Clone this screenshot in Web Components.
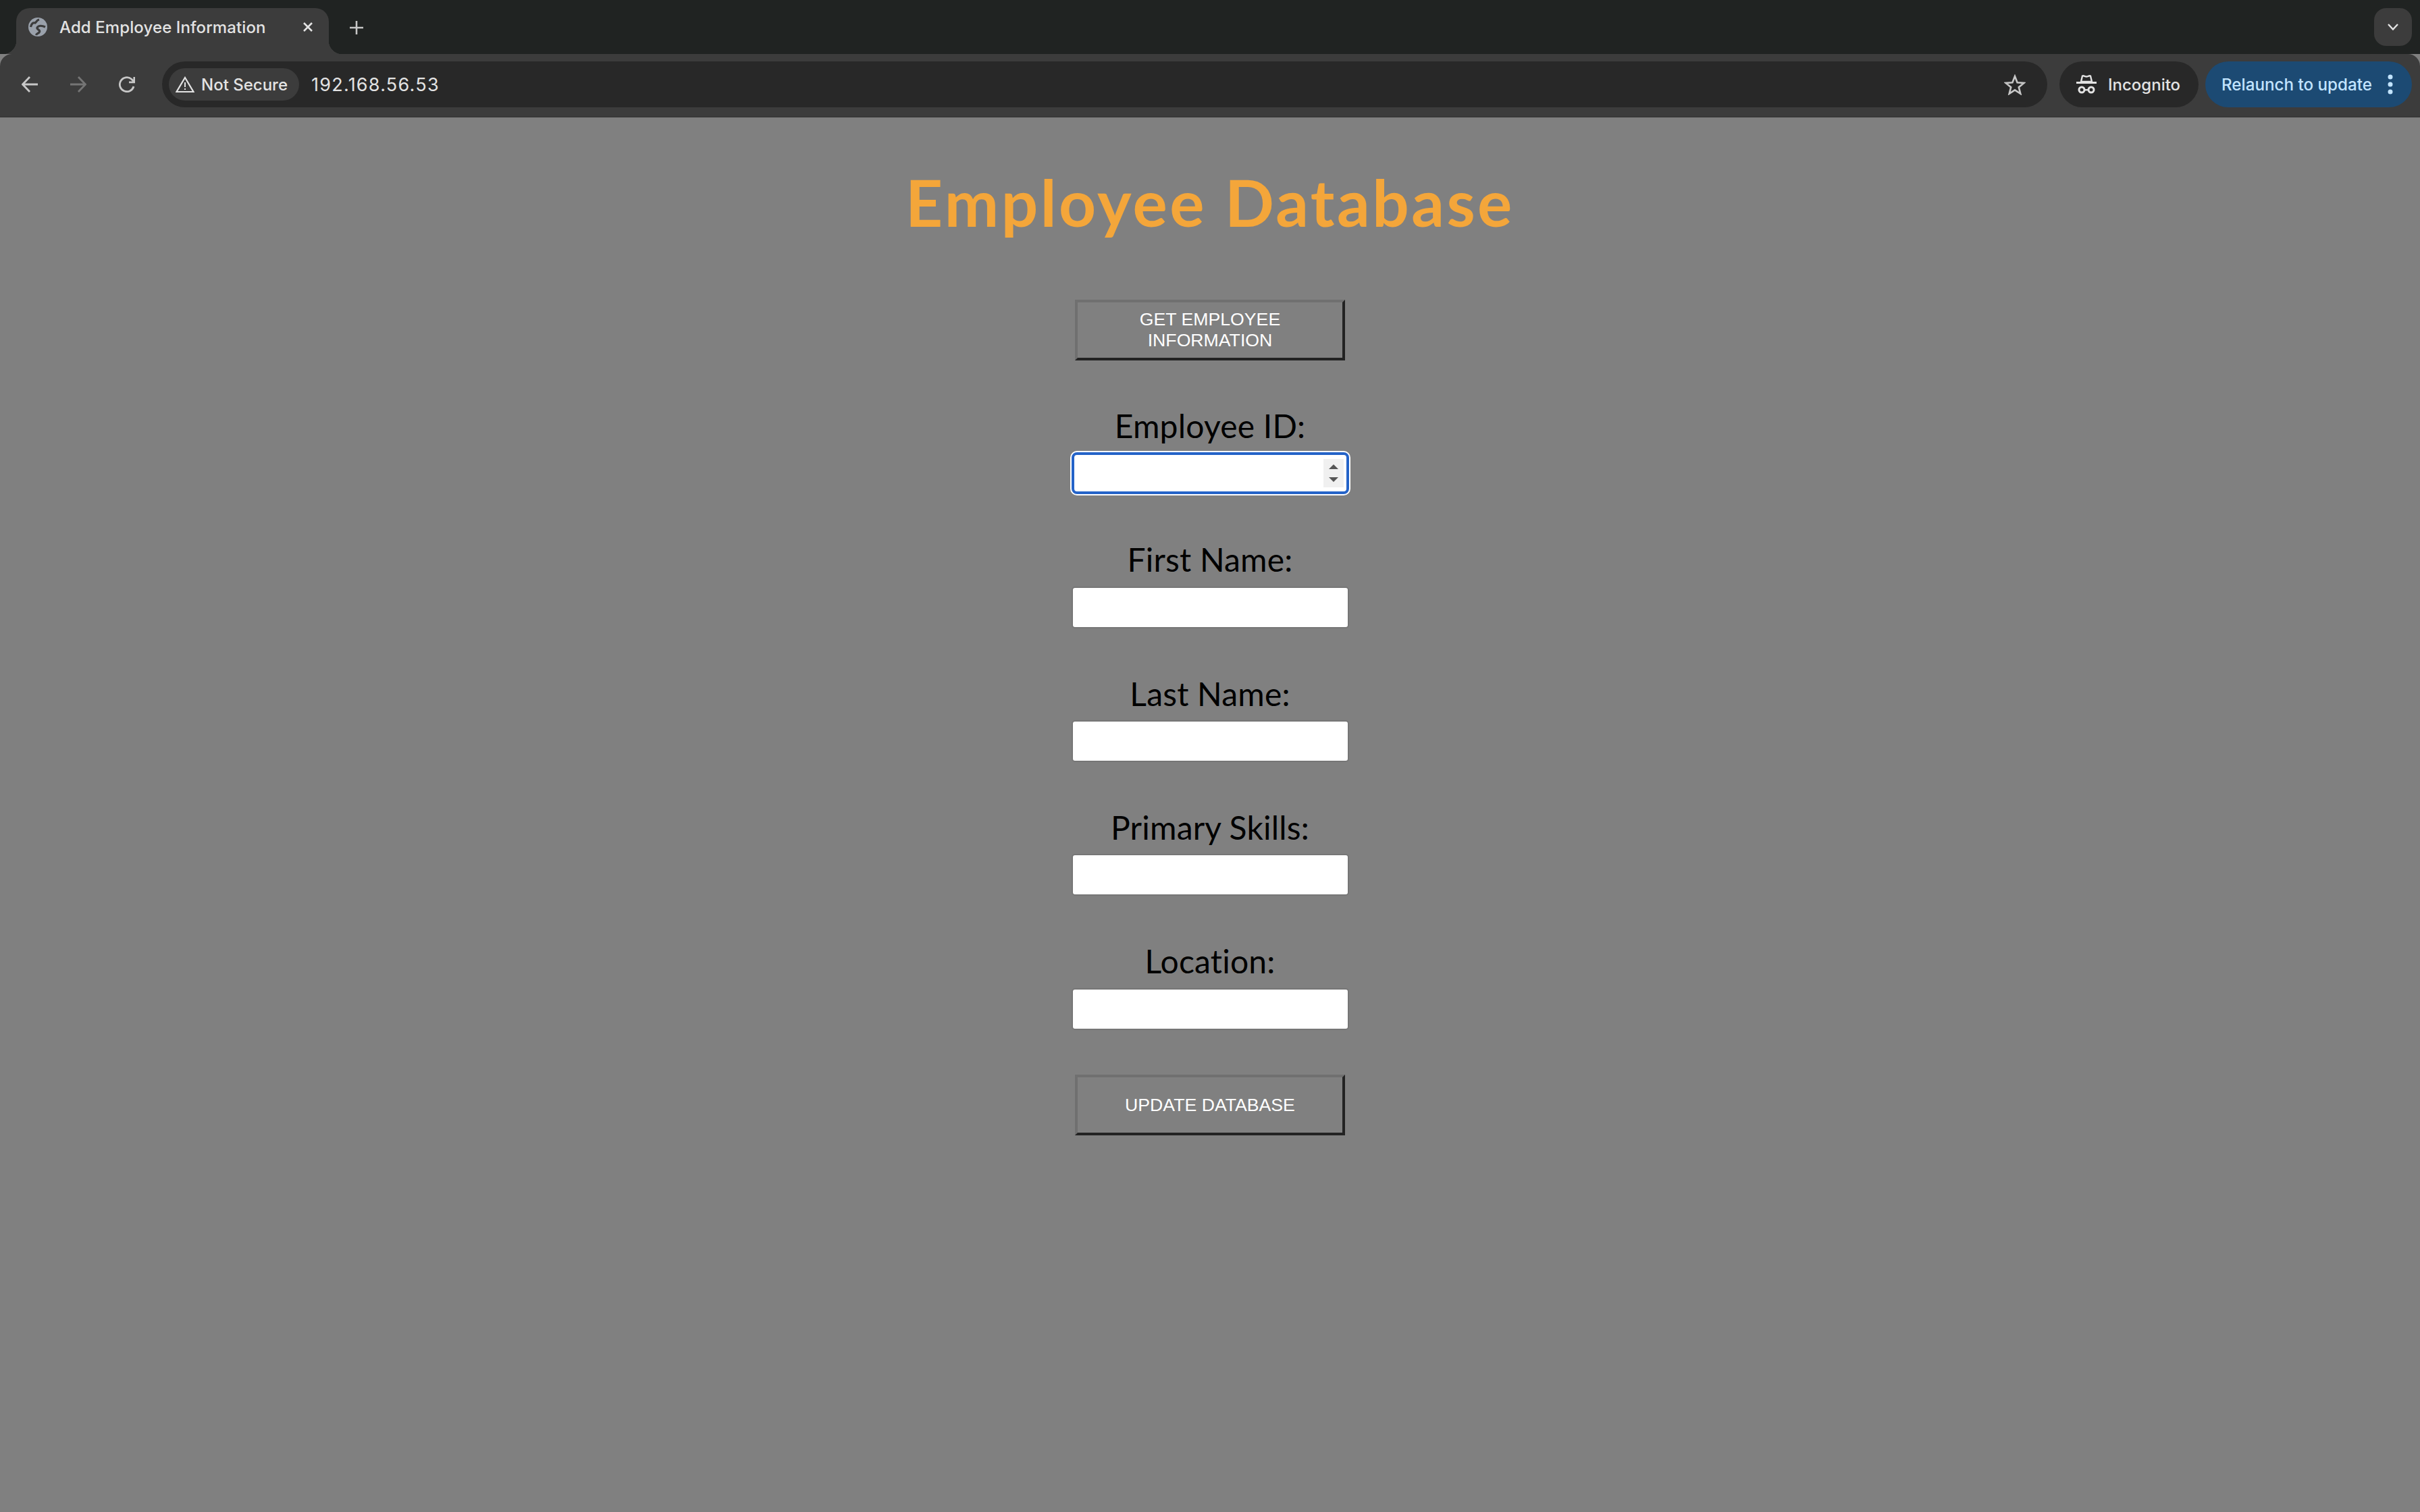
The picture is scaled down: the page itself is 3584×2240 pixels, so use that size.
<!DOCTYPE html>
<html lang="en">
<head>
<meta charset="utf-8">
<title>Add Employee Information</title>
<style>
    html, body { margin: 0; height: 100%; background: #808080; }
    body { display: flex; flex-direction: column; height: 2240px; overflow: hidden; }
</style>
</head>
<body>
<browser-tabstrip title-text="Add Employee Information"></browser-tabstrip>
<browser-toolbar url="192.168.56.53"></browser-toolbar>
<employee-page>
    <form-button>GET EMPLOYEE<br>INFORMATION</form-button>
    <form-field label="Employee ID:" focused spinner></form-field>
    <form-field label="First Name:"></form-field>
    <form-field label="Last Name:"></form-field>
    <form-field label="Primary Skills:"></form-field>
    <form-field label="Location:"></form-field>
    <form-button>UPDATE DATABASE</form-button>
</employee-page>

<script>
class BrowserTabstrip extends HTMLElement {
    constructor() {
        super();
        this.attachShadow({ mode: "open" });
    }

    connectedCallback() {
        this.shadowRoot.innerHTML = `
            <style>
                :host { display: flex; flex: none; height: 80px; box-sizing: border-box; padding: 12px 12px 0 24px; background: #202322; font-family: Inter, "Liberation Sans", sans-serif; }
                .tab { position: relative; display: flex; align-items: center; box-sizing: border-box; width: 463px; height: 68px; padding: 0 23px 12px 18px; background: #3c3c3c; border-radius: 20px 20px 0 0; color: #e3e3e3; font-size: 24px; font-weight: 500; letter-spacing: 0.1px; }
                .tab::before, .tab::after { content: ""; position: absolute; bottom: 0; width: 20px; height: 20px; }
                .tab::before { left: -20px; background: radial-gradient(circle at 0 0, transparent 20px, #3c3c3c 20.5px); }
                .tab::after { right: -20px; background: radial-gradient(circle at 100% 0, transparent 20px, #3c3c3c 20.5px); }
                .globe { flex: none; width: 28px; height: 28px; margin-right: 18px; }
                .name { flex: 1; white-space: nowrap; }
                .close { flex: none; width: 16px; height: 16px; }
                .plus { flex: none; width: 20px; height: 20px; margin: 19px 0 0 31px; }
                .more { display: flex; align-items: center; justify-content: center; width: 56px; height: 56px; margin-left: auto; background: #3c3c3c; border-radius: 18px; }
                .more svg { width: 16px; height: 10px; }
            </style>
            <div class="tab">
                <svg class="globe" viewBox="0 0 28 28">
                    <circle cx="14" cy="14" r="14" fill="#9aa1ab"/>
                    <path d="M3.500 14C4.500 9 7 7 10 8 12 7 12 4 16 3" fill="none" stroke="#3c3c3c" stroke-width="3.2"/>
                    <path d="M25 14C21 12 15 11 13 15 12 18 19 18 16 22 14 24 12 24 11.500 26" fill="none" stroke="#3c3c3c" stroke-width="3.2"/>
                </svg>
                <span class="name">${this.getAttribute("title-text")}</span>
                <svg class="close" viewBox="0 0 16 16"><path d="M2 2 14 14M14 2 2 14" stroke="#e3e3e3" stroke-width="2.6"/></svg>
            </div>
            <svg class="plus" viewBox="0 0 20 20"><path d="M10 0V20M0 10H20" stroke="#c7c7c7" stroke-width="2.6"/></svg>
            <div class="more">
                <svg viewBox="0 0 16 10"><path d="M1 1 8 8.5 15 1" fill="none" stroke="#e3e3e3" stroke-width="2.4"/></svg>
            </div>
        `;
    }
}

class BrowserToolbar extends HTMLElement {
    constructor() {
        super();
        this.attachShadow({ mode: "open" });
    }

    connectedCallback() {
        this.shadowRoot.innerHTML = `
            <style>
                :host { display: flex; flex: none; align-items: center; box-sizing: border-box; height: 94px; padding: 12px 12px 14px 8px; background: #3c3c3c; border-radius: 18px 18px 0 0; border-bottom: 2px solid #383838; font-family: Inter, "Liberation Sans", sans-serif; }
                .nav { display: flex; justify-content: center; flex: none; width: 72px; }
                .nav svg { width: 24px; height: 24px; }
                .omnibox { display: flex; align-items: center; flex: 1; height: 68px; margin-left: 16px; padding: 0 32px 0 10px; background: #282828; border-radius: 34px; color: #e3e3e3; }
                .chip { display: flex; align-items: center; box-sizing: border-box; width: 193px; height: 48px; padding-left: 10px; background: #3c3c3c; border-radius: 24px; font-size: 24px; font-weight: 500; white-space: nowrap; }
                .chip svg { width: 28px; height: 24px; margin-right: 10px; }
                .url { margin-left: 18px; font-size: 27px; letter-spacing: 1.25px; }
                .star { width: 32px; height: 31px; margin-left: auto; }
                .incognito { display: flex; align-items: center; flex: none; box-sizing: border-box; height: 68px; width: 206px; margin-left: 18px; padding-left: 25px; background: #282828; border-radius: 34px; color: #e3e3e3; font-size: 24px; font-weight: 500; }
                .incognito svg { width: 30px; height: 30px; margin-right: 17px; }
                .relaunch { display: flex; align-items: center; flex: none; box-sizing: border-box; height: 68px; width: 306px; margin-left: 10px; padding-left: 24px; background: #1c4a73; border-radius: 34px; color: #c2e4ff; font-size: 24.2px; font-weight: 500; white-space: nowrap; }
                .dots { width: 8px; height: 30px; margin-left: auto; margin-right: 28px; }
            </style>
            <span class="nav"><svg viewBox="0 0 24 24"><path d="M24 12H2M12 1 1.500 12 12 23" fill="none" stroke="#c7c7c7" stroke-width="2.8"/></svg></span>
            <span class="nav"><svg viewBox="0 0 24 24"><path d="M0 12H22M12 1 22.500 12 12 23" fill="none" stroke="#757575" stroke-width="2.8"/></svg></span>
            <span class="nav"><svg viewBox="0 0 24 24"><path d="M22 15A10.500 10.500 0 1 1 18.500 4L22 7.500M22.800 1V8.800H15" fill="none" stroke="#c7c7c7" stroke-width="2.8"/></svg></span>
            <div class="omnibox">
                <div class="chip">
                    <svg viewBox="0 0 28 24">
                        <path d="M14 2 26.500 23H1.500Z" fill="none" stroke="#e3e3e3" stroke-width="2.2"/>
                        <path d="M13 9H15V16H13ZM13 18H15V20H13Z" fill="#e3e3e3"/>
                    </svg>
                    Not Secure
                </div>
                <span class="url">${this.getAttribute("url")}</span>
                <svg class="star" viewBox="0 0 32 31"><path d="M16 3 19.600 12.300 29.500 12.900 21.800 19.200 24.300 28.800 16 23.400 7.700 28.800 10.200 19.200 2.500 12.900 12.400 12.300Z" fill="none" stroke="#c7c7c7" stroke-width="2.6"/></svg>
            </div>
            <div class="incognito">
                <svg viewBox="0 0 30 30">
                    <path d="M7 11 9 2.500C11 1.500 12.500 3.500 15 3.500 17.500 3.500 19 1.500 21 2.500L23 11Z" fill="none" stroke="#e3e3e3" stroke-width="2.4"/>
                    <rect y="11" width="30" height="3" fill="#e3e3e3"/>
                    <circle cx="8" cy="23" r="4" fill="none" stroke="#e3e3e3" stroke-width="3"/>
                    <circle cx="22" cy="23" r="4" fill="none" stroke="#e3e3e3" stroke-width="3"/>
                    <rect x="11" y="22" width="8" height="2.400" fill="#e3e3e3"/>
                </svg>
                Incognito
            </div>
            <div class="relaunch">
                Relaunch to update
                <svg class="dots" viewBox="0 0 8 30"><circle cx="4" cy="4" r="3.500" fill="#c2e4ff"/><circle cx="4" cy="15" r="3.500" fill="#c2e4ff"/><circle cx="4" cy="26" r="3.500" fill="#c2e4ff"/></svg>
            </div>
        `;
    }
}

class EmployeePage extends HTMLElement {
    constructor() {
        super();
        this.attachShadow({ mode: "open" });
    }

    connectedCallback() {
        this.shadowRoot.innerHTML = `
            <style>
                :host { display: flex; flex: 1; flex-direction: column; align-items: center; background: #808080; font-family: Lato, "Liberation Sans", sans-serif; font-variant-ligatures: none; }
                h1 { margin: 65px 0 85px; color: #f4a63a; font-size: 96px; font-weight: 700; line-height: 120px; letter-spacing: 3.5px; }
                .form { display: flex; flex-direction: column; align-items: center; gap: 66.55px; }
            </style>
            <h1>Employee Database</h1>
            <div class="form"><slot></slot></div>
        `;
    }
}

class FormField extends HTMLElement {
    constructor() {
        super();
        this.attachShadow({ mode: "open" });
    }

    connectedCallback() {
        const isNumber = this.hasAttribute("spinner");
        this.shadowRoot.innerHTML = `
            <style>
                :host { display: flex; flex-direction: column; align-items: center; }
                label { padding-top: 1.5px; margin-bottom: 9.5px; color: #000; font-size: 48px; line-height: 58.8px; letter-spacing: 0.2px; }
                .box { position: relative; width: 411px; height: 62px; }
                input { display: block; box-sizing: border-box; width: 100%; height: 100%; margin: 0; padding: 0 4px; background: #fff; border: 2px solid #767676; border-radius: 5px; outline: none; appearance: textfield; }
                :host([focused]) input { border: 4px solid #2463c8; border-radius: 8px; box-shadow: 0 0 0 2px #fff; }
                .spinner { position: absolute; top: 10px; right: 8px; display: flex; flex-direction: column; align-items: center; justify-content: center; gap: 12px; width: 30px; height: 42px; background: #f0f0f0; }
                .up, .down { width: 0; height: 0; border-left: 7px solid transparent; border-right: 7px solid transparent; }
                .up { border-bottom: 7px solid #555; }
                .down { border-top: 7px solid #555; }
            </style>
            <label>${this.getAttribute("label")}</label>
            <div class="box">
                <input type="${isNumber ? "number" : "text"}">
                ${isNumber ? '<div class="spinner"><span class="up"></span><span class="down"></span></div>' : ""}
            </div>
        `;
    }
}

class FormButton extends HTMLElement {
    constructor() {
        super();
        this.attachShadow({ mode: "open" });
    }

    connectedCallback() {
        this.shadowRoot.innerHTML = `
            <style>
                :host { display: block; }
                button { display: block; box-sizing: border-box; width: 400px; height: 90px; padding: 0; background: #808080; border: 4px solid; border-color: #707070 #222 #222 #707070; color: #fff; font-family: "Liberation Sans", Arial, sans-serif; font-size: 26.67px; }
            </style>
            <button type="button"><slot></slot></button>
        `;
    }
}

customElements.define("browser-tabstrip", BrowserTabstrip);
customElements.define("browser-toolbar", BrowserToolbar);
customElements.define("employee-page", EmployeePage);
customElements.define("form-field", FormField);
customElements.define("form-button", FormButton);
</script>
</body>
</html>
